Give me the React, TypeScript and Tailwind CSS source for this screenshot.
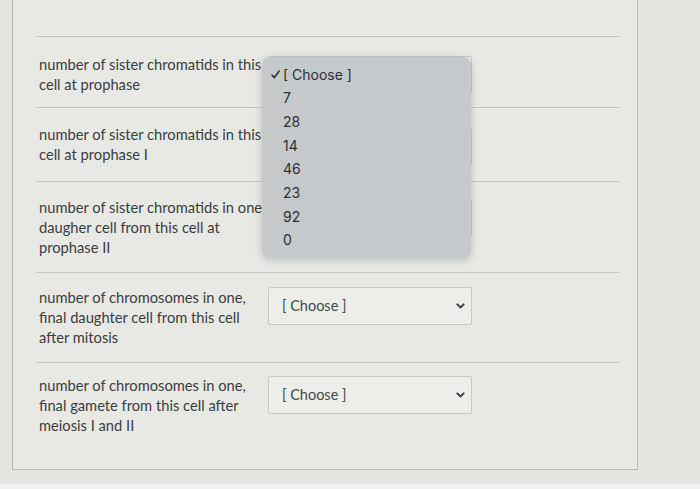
import React from "react";

const rows = [
  { lines: ["number of sister chromatids in this", "cell at prophase"], h: "h-[71px]", pt: "pt-[17px]", st: "mt-[2px]", open: true },
  { lines: ["number of sister chromatids in this", "cell at prophase I"], h: "h-[74px]", pt: "pt-[16px]", st: "mt-[4px]", open: true },
  { lines: ["number of sister chromatids in one", "daugher cell from this cell at", "prophase II"], h: "h-[91px]", pt: "pt-[15px]", st: "mt-[2px]", open: true },
  { lines: ["number of chromosomes in one,", "final daughter cell from this cell", "after mitosis"], h: "h-[90px]", pt: "pt-[14px]", st: "mt-0", open: false },
  { lines: ["number of chromosomes in one,", "final gamete from this cell after", "meiosis I and II"], h: "h-[90px]", pt: "pt-[12px]", st: "mt-[1px]", open: false },
];

const options = ["7", "28", "14", "46", "23", "92", "0"];

const Chevron = () => (
  <svg width="9" height="6" viewBox="0 0 9 6" className="text-[#3a3d42]">
    <path d="M1.3 1.3 L4.5 4.5 L7.7 1.3" fill="none" stroke="currentColor" strokeWidth="1.9" strokeLinecap="round" />
  </svg>
);

const Check = () => (
  <svg width="9" height="9" viewBox="0 0 9 9" className="text-[#2c2f33]">
    <path d="M1 5 L3.4 7.6 L8 1.2" fill="none" stroke="currentColor" strokeWidth="1.6" strokeLinecap="round" strokeLinejoin="round" />
  </svg>
);

// select boxes under the open list keep only their frame visible
const Select = ({ className, hidden }: { className: string; hidden: boolean }) => (
  <div
    className={`flex h-[38px] w-[204px] items-center justify-between rounded-[2px] border border-[#c8cac5] bg-[#eceeea] pl-[13px] pr-[6px] ${className}`}
  >
    {hidden ? null : (
      <>
        <span className="text-[14.5px] text-[#44474b]">[ Choose ]</span>
        <Chevron />
      </>
    )}
  </div>
);

const App = () => {
  return (
    <div className="relative flex h-[489px] w-[700px] flex-col overflow-hidden bg-[#e4e5e1] font-['Lato',sans-serif]">
      <div className="ml-[12px] h-[470px] w-[626px] shrink-0 border-x border-b border-[#b5b7b2] bg-[#e8e9e5] pl-[23px] pr-[18px] pt-[36px]">
        {rows.map((r, i) => (
          <div key={i} className={`flex border-t border-[#c4c6c1] ${r.h} ${r.pt}`}>
            <div className="w-[232px] pl-[3px] text-[14.7px] leading-[20px] text-[#3a3d41]">
              {r.lines.map((l, j) => (
                <div key={j} className="whitespace-nowrap">{l}</div>
              ))}
            </div>
            <Select className={r.st} hidden={r.open} />
          </div>
        ))}
      </div>
      <div className="flex-1" />
      <div className="h-[5px] bg-[#f1f2ef]" />

      {/* open native dropdown */}
      <div className="absolute left-[262px] top-[57px] w-[209px] rounded-[8px] bg-[#c5c9cb] pb-[6px] pt-[5px] font-['Inter',sans-serif] text-[14px] text-[#2c2f33] shadow-[0_2px_8px_rgba(0,0,0,0.18)]">
        <div className="flex h-[24px] items-center">
          <span className="flex w-[21px] pl-[9px]">
            <Check />
          </span>
          <span>[ Choose ]</span>
        </div>
        {options.map((o) => (
          <div key={o} className="flex h-[23.7px] items-center pl-[21px]">
            {o}
          </div>
        ))}
      </div>
    </div>
  );
};

export default App;
